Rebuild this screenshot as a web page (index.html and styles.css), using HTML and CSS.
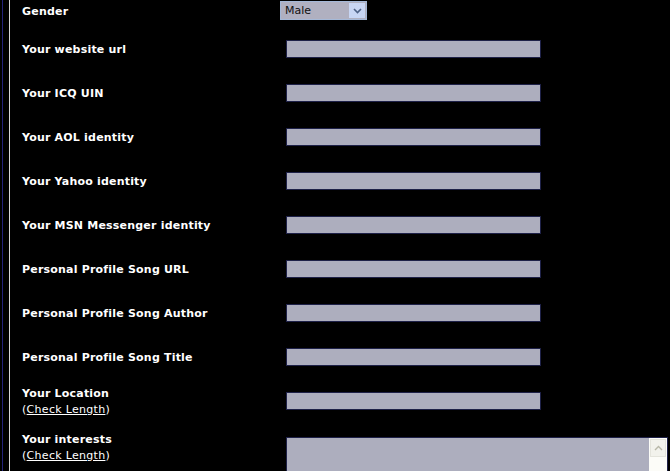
FILE: index.html
```html
<!DOCTYPE html>
<html lang="en">
<head>
  <meta charset="UTF-8"/>
  <title>Edit Profile</title>
  <link rel="stylesheet" href="styles.css">
</head>
<body>

  <!-- Outer frame lines -->
  <div class="frame">
    <div class="panel">

      <!-- Gender -->
      <div class="row row-gender">
        <div class="label">Gender</div>
        <div class="field">
          <div class="select-box">
            <span class="select-value">Male</span>
            <span class="select-btn">
              <svg width="9" height="6" viewBox="0 0 9 6"><path d="M1 1 L4.5 4.5 L8 1" fill="none" stroke="#4d6185" stroke-width="1.6"/></svg>
            </span>
          </div>
        </div>
      </div>

      <div class="row">
        <div class="label">Your website url</div>
        <div class="field"><input type="text" class="text-input"></div>
      </div>

      <div class="row">
        <div class="label">Your ICQ UIN</div>
        <div class="field"><input type="text" class="text-input"></div>
      </div>

      <div class="row">
        <div class="label">Your AOL identity</div>
        <div class="field"><input type="text" class="text-input"></div>
      </div>

      <div class="row">
        <div class="label">Your Yahoo identity</div>
        <div class="field"><input type="text" class="text-input"></div>
      </div>

      <div class="row">
        <div class="label">Your MSN Messenger identity</div>
        <div class="field"><input type="text" class="text-input"></div>
      </div>

      <div class="row">
        <div class="label">Personal Profile Song URL</div>
        <div class="field"><input type="text" class="text-input"></div>
      </div>

      <div class="row">
        <div class="label">Personal Profile Song Author</div>
        <div class="field"><input type="text" class="text-input"></div>
      </div>

      <div class="row">
        <div class="label">Personal Profile Song Title</div>
        <div class="field"><input type="text" class="text-input"></div>
      </div>

      <div class="row">
        <div class="label">Your Location<br><span class="check">(<a href="#">Check Length</a>)</span></div>
        <div class="field"><input type="text" class="text-input"></div>
      </div>

      <!-- Interests (textarea) -->
      <div class="row row-top">
        <div class="label">Your interests<br><span class="check">(<a href="#">Check Length</a>)</span></div>
        <div class="field">
          <div class="area-box">
            <textarea class="area"></textarea>
            <div class="scrollbar">
              <div class="scroll-up">
                <svg width="9" height="6" viewBox="0 0 9 6"><path d="M1 5 L4.5 1.5 L8 5" fill="none" stroke="#b8b8a8" stroke-width="1.4"/></svg>
              </div>
            </div>
          </div>
        </div>
      </div>

    </div>
  </div>

</body>
</html>
```

FILE: styles.css
```css
/**********************************************
 *  Page
 **********************************************/
body {
  margin: 0;
  background-color: #000;
  color: #fff;
  font-family: "DejaVu Sans", Verdana, sans-serif;
  font-size: 11px;
  overflow: hidden;
}

.frame {
  margin-left: 2px;
  border-left: 1px solid #23237a;
  padding-left: 6px;
  min-height: 471px;
}

.panel {
  border-left: 1px solid #d8d8d8;
  padding-left: 12px;
  min-height: 471px;
}

/**********************************************
 *  Form rows
 **********************************************/
.row {
  display: flex;
  align-items: center;
  height: 44px;
}

.row-gender {
  height: 27px;
  align-items: flex-start;
}

.row-gender .label {
  padding-top: 4px;
}

.row-top {
  align-items: flex-start;
  padding-top: 8px;
}

.row-top .label {
  padding-top: 1px;
}

.label {
  width: 258px;
  padding-top: 2px;
  font-weight: bold;
  font-size: 11px;
  letter-spacing: 0.2px;
  line-height: 16px;
}

.check {
  font-weight: normal;
  letter-spacing: 0.3px;
}

.check a {
  color: #fff;
  text-decoration: underline;
}

.field {
  flex-grow: 1;
}

/**********************************************
 *  Inputs
 **********************************************/
.text-input {
  display: block;
  box-sizing: border-box;
  width: 255px;
  height: 18px;
  margin: 0 0 0 6px;
  padding: 0;
  border: 1px solid #1e2148;
  background-color: #adaebe;
}

.select-box {
  display: flex;
  align-items: center;
  box-sizing: border-box;
  width: 87px;
  height: 19px;
  margin-top: 1px;
  border: 1px solid #a5b9d8;
  background-color: #b0b0c0;
  color: #111;
  font-size: 11px;
}

.select-value {
  flex-grow: 1;
  padding-left: 4px;
}

.select-btn {
  display: flex;
  align-items: center;
  justify-content: center;
  width: 16px;
  height: 15px;
  margin-right: 1px;
  background-color: #c8d6f4;
}

.area-box {
  display: flex;
  box-sizing: border-box;
  width: 382px;
  height: 100px;
  margin: 6px 0 0 6px;
  border: 1px solid #1e2148;
}

.area {
  flex-grow: 1;
  margin: 0;
  border: none;
  padding: 0;
  resize: none;
  background-color: #adaebe;
}

.scrollbar {
  width: 18px;
  background-color: #fcfcf8;
}

.scroll-up {
  display: flex;
  align-items: center;
  justify-content: center;
  height: 16px;
  margin: 1px;
  border: 1px solid #e4e4dc;
  background-color: #f2f2ec;
}
```
